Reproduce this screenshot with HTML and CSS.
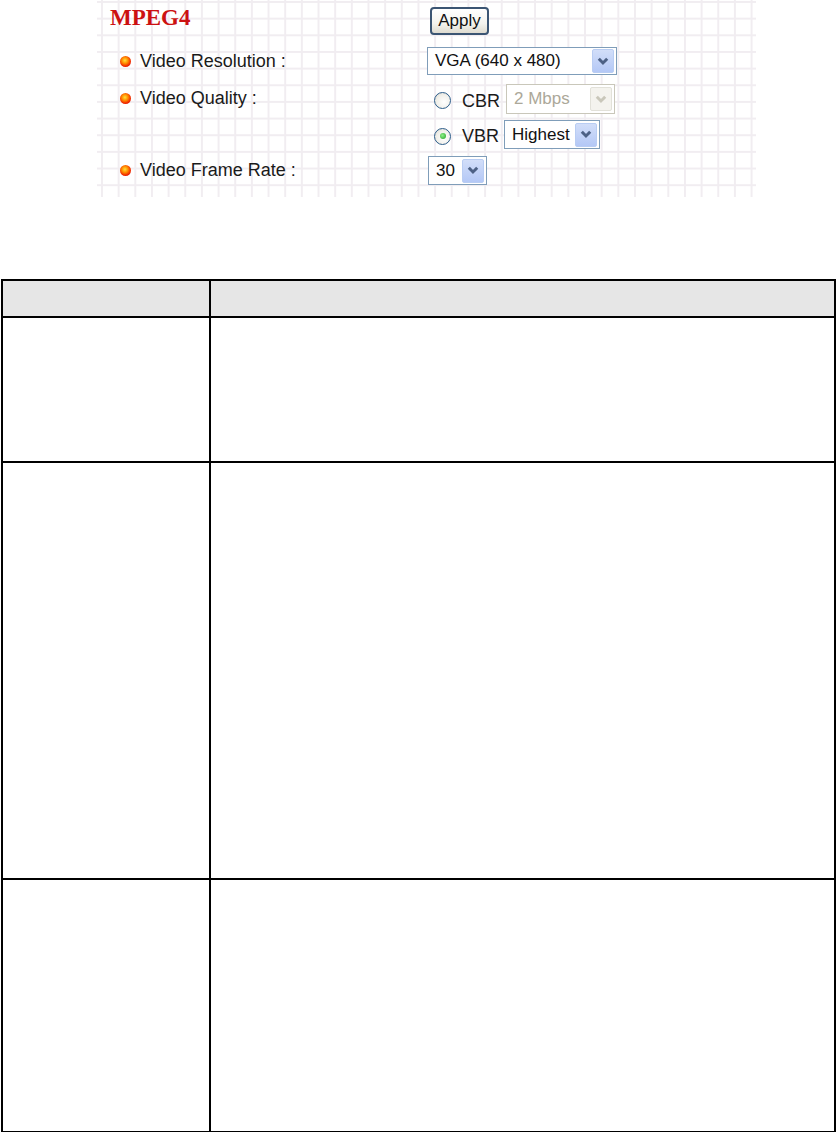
FILE: index.html
```html
<!DOCTYPE html>
<html lang="en">
<head>
  <meta charset="UTF-8" />
  <meta name="viewport" content="width=device-width, initial-scale=1.0"/>
  <title>MPEG4</title>
  <link rel="stylesheet" href="styles.css">
</head>
<body>
  <div class="panel">
    <div class="row head">
      <div class="label"><span class="title">MPEG4</span></div>
      <div class="ctrl"><button class="apply">Apply</button></div>
    </div>

    <div class="row res">
      <div class="label"><span class="dot"></span>Video Resolution :</div>
      <div class="ctrl">
        <div class="select wide">
          <span class="val">VGA (640 x 480)</span>
          <span class="arrow"><svg width="12" height="9" viewBox="0 0 12 9"><path d="M1.8 1.8 L6 6 L10.2 1.8" fill="none" stroke="currentColor" stroke-width="3"/></svg></span>
        </div>
      </div>
    </div>

    <div class="row quality">
      <div class="label"><span class="dot"></span>Video Quality :</div>
      <div class="ctrl stack">
        <div class="opt cbr">
          <span class="radio"></span>
          <span class="opt-name">CBR</span>
          <div class="select rate disabled">
            <span class="val">2 Mbps</span>
            <span class="arrow"><svg width="12" height="9" viewBox="0 0 12 9"><path d="M1.8 1.8 L6 6 L10.2 1.8" fill="none" stroke="currentColor" stroke-width="3"/></svg></span>
          </div>
        </div>
        <div class="opt vbr">
          <span class="radio checked"></span>
          <span class="opt-name">VBR</span>
          <div class="select level">
            <span class="val">Highest</span>
            <span class="arrow"><svg width="12" height="9" viewBox="0 0 12 9"><path d="M1.8 1.8 L6 6 L10.2 1.8" fill="none" stroke="currentColor" stroke-width="3"/></svg></span>
          </div>
        </div>
      </div>
    </div>

    <div class="row frame">
      <div class="label"><span class="dot"></span>Video Frame Rate :</div>
      <div class="ctrl">
        <div class="select fps">
          <span class="val">30</span>
          <span class="arrow"><svg width="12" height="9" viewBox="0 0 12 9"><path d="M1.8 1.8 L6 6 L10.2 1.8" fill="none" stroke="currentColor" stroke-width="3"/></svg></span>
        </div>
      </div>
    </div>
  </div>

  <table class="params">
    <tr class="th"><td class="c1"></td><td></td></tr>
    <tr class="r1"><td class="c1"></td><td></td></tr>
    <tr class="r2"><td class="c1"></td><td></td></tr>
    <tr class="r3"><td class="c1"></td><td></td></tr>
  </table>
</body>
</html>
```

FILE: styles.css
```css
body {
  margin: 0;
  background: #fff;
  font-family: "Liberation Sans", Arial, sans-serif;
  color: #1a1a1a;
}

/* settings screenshot with the grid paper background */
.panel {
  margin-left: 97px;
  width: 659px;
  height: 197px;
  padding-top: 7px;
  box-sizing: border-box;
  background-color: #fff;
  background-image:
    linear-gradient(to right, #f1edf1 2px, transparent 2px),
    linear-gradient(to bottom, #f1edf1 2px, transparent 2px);
  background-size: 16.66px 16.66px;
  background-position: 4px 1px;
}
.row {
  display: flex;
  align-items: flex-start;
}
.label {
  width: 330px;
  padding-left: 23px;
  box-sizing: border-box;
  display: flex;
  align-items: center;
  gap: 9px;
  font-size: 18px;
  height: 29px;
}
.head .label {
  padding-left: 13px;
  height: 28px;
}
.title {
  font-family: "Liberation Serif", "Times New Roman", serif;
  font-weight: bold;
  font-size: 23px;
  color: #cc1111;
  margin-top: -6px;
}
.dot {
  width: 11px;
  height: 11px;
  border-radius: 50%;
  background: radial-gradient(circle at 45% 40%, #ffe23a 0, #ff8a00 35%, #f02800 65%, #c80000 100%);
}
.ctrl {
  display: flex;
  align-items: center;
}

.apply {
  margin-left: 3px;
  width: 59px;
  height: 28px;
  border: 2px solid #3b5573;
  border-radius: 4px;
  background: linear-gradient(#ffffff, #f4f3ee 60%, #dedbd0);
  font-family: "Liberation Sans", Arial, sans-serif;
  font-size: 17px;
  color: #111;
  padding: 0;
}

.res { margin-top: 12px; }
.quality { margin-top: 8px; }
.frame { margin-top: 7px; }

.select {
  box-sizing: border-box;
  height: 28px;
  border: 1px solid #7f9db9;
  background: #fff;
  display: flex;
  align-items: center;
  justify-content: space-between;
  padding: 0 2px 0 7px;
  font-size: 17px;
  color: #111;
}
.arrow {
  box-sizing: border-box;
  width: 22px;
  height: 24px;
  border: 1px solid #b9cdf3;
  border-radius: 2px;
  background: linear-gradient(#d2def9, #b4c8f6);
  color: #4d6185;
  display: flex;
  align-items: center;
  justify-content: center;
}
.wide { width: 190px; }
.fps { width: 59px; height: 29px; margin-left: 1px; }
.level { width: 96px; height: 29px; }
.rate { width: 109px; height: 30px; }

.disabled {
  border-color: #c9c7ba;
  color: #aca899;
}
.disabled .arrow {
  background: #f4f3ee;
  border-color: #e2e1d9;
  color: #c9c7ba;
}

.stack {
  flex-direction: column;
  align-items: flex-start;
  gap: 6px;
}
.opt {
  display: flex;
  align-items: center;
  padding-left: 7px;
  height: 30px;
}
.vbr { height: 29px; }
.opt-name {
  font-size: 18px;
  margin: 0 6px 0 11px;
  padding-top: 4px;
}
.vbr .opt-name { margin-right: 5px; }
.radio {
  box-sizing: border-box;
  width: 17px;
  height: 17px;
  border: 1.5px solid #2c5d8a;
  border-radius: 50%;
  background: radial-gradient(circle at 60% 60%, #fff 0, #f1f0ea 55%, #d8d6cc 100%);
  display: flex;
  align-items: center;
  justify-content: center;
  margin-top: 3px;
}
.radio.checked::after {
  content: "";
  width: 6px;
  height: 6px;
  border-radius: 50%;
  background: radial-gradient(circle at 40% 40%, #8ef08a, #21a121);
}

/* description table */
.params {
  margin-top: 82px;
  margin-left: 1px;
  width: 835px;
  border-collapse: collapse;
}
.params td {
  border: 2px solid #000;
  padding: 0;
}
.params .c1 { width: 206px; }
.th td {
  background: #e6e6e6;
  height: 35px;
}
.r1 td { height: 143px; }
.r2 td { height: 415px; }
.r3 td { height: 251px; }
```
